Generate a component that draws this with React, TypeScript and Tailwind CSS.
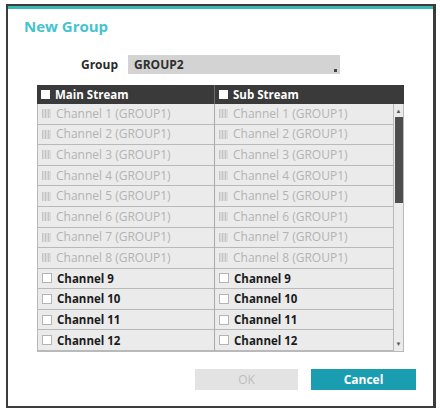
import React from 'react';

const channels = Array.from({ length: 12 }, (_, i) => i + 1);

function Check({ disabled }: { disabled: boolean }) {
  if (disabled) {
    return (
      <span className="w-[9px] h-[9px] shrink-0 bg-[#d2d2d2] bg-[repeating-linear-gradient(90deg,#c4c4c4_0px,#c4c4c4_1px,#dadada_1px,#dadada_3px)]" />
    );
  }
  return <span className="w-[10px] h-[10px] shrink-0 bg-white border border-[#b4b4b4]" />;
}

function Cell({ n, last }: { n: number; last?: boolean }) {
  const disabled = n <= 8;
  return (
    <div
      className={`flex items-center gap-[5px] pl-[4px] border-b border-[#b9b9b9] ${last ? '' : 'border-r border-r-[#a8a8a8]'}`}
    >
      <Check disabled={disabled} />
      <span className={disabled ? 'text-[#b3b3b3] font-normal text-[12px]' : 'text-[#1b1b1b] font-bold'}>
        {disabled ? `Channel ${n} (GROUP1)` : `Channel ${n}`}
      </span>
    </div>
  );
}

export default function App() {
  return (
    <div className="w-[440px] h-[412px] bg-white pt-[4px] pl-[6px] font-['Open_Sans',sans-serif]">
      <div className="w-[430px] h-[404px] border-2 border-[#3c3c3c] border-r-[3px] bg-white flex flex-col">
        <div className="h-[3px] bg-[#39b8b8]" />
        <div className="pl-[16px] pt-[8px] text-[15px] leading-[18px] font-bold text-[#46c3cf]">New Group</div>

        <div className="flex items-center mt-[20px] h-[19px]">
          <span className="w-[110px] text-right text-[12px] font-bold text-[#2a2a2a]">Group</span>
          <div className="ml-[10px] w-[212px] h-[19px] bg-[#d3d3d3] relative flex items-center pl-[6px] text-[12px] font-bold text-[#2f2f2f]">
            GROUP2
            <span className="absolute right-[3px] bottom-[2px] w-[3px] h-[3px] bg-[#444]" />
          </div>
        </div>

        <div className="ml-[29px] mt-[11px] w-[367px] h-[267px] flex flex-col text-[11.5px] border-b border-[#b9b9b9]">
          <div className="h-[19px] bg-[#3a3a3a] flex text-white font-bold">
            <div className="w-[178px] flex items-center gap-[5px] pl-[4px] border-r border-[#6a6a6a]">
              <span className="w-[9px] h-[9px] bg-white" />
              Main Stream
            </div>
            <div className="flex-1 flex items-center gap-[5px] pl-[4px]">
              <span className="w-[9px] h-[9px] bg-white" />
              Sub Stream
            </div>
          </div>
          <div className="flex-1 flex bg-[#ebebeb] border-l border-[#b9b9b9]">
            <div className="flex-1 grid grid-cols-[177px_1fr] grid-rows-[repeat(12,1fr)]">
              {channels.map((n) => (
                <React.Fragment key={n}>
                  <Cell n={n} />
                  <Cell n={n} last />
                </React.Fragment>
              ))}
            </div>
            <div className="w-[11px] border-l border-r border-[#b9b9b9] flex flex-col items-center pt-[3px] pb-[3px]">
              <span className="text-[6px] leading-[8px] text-[#555]">▲</span>
              <div className="w-[8px] h-[86px] bg-[#4e4e4e] mt-[2px]" />
              <div className="flex-1" />
              <span className="text-[6px] leading-[8px] text-[#555]">▼</span>
            </div>
          </div>
        </div>

        <div className="flex mt-[17px] ml-[187px] gap-[13px]">
          <div className="w-[103px] h-[21px] bg-[#e3e3e3] flex items-center justify-center text-[12px] text-[#bdbdbd]">OK</div>
          <div className="w-[105px] h-[21px] bg-[#1b9db1] flex items-center justify-center text-[12px] font-bold text-white">Cancel</div>
        </div>
      </div>
    </div>
  );
}
